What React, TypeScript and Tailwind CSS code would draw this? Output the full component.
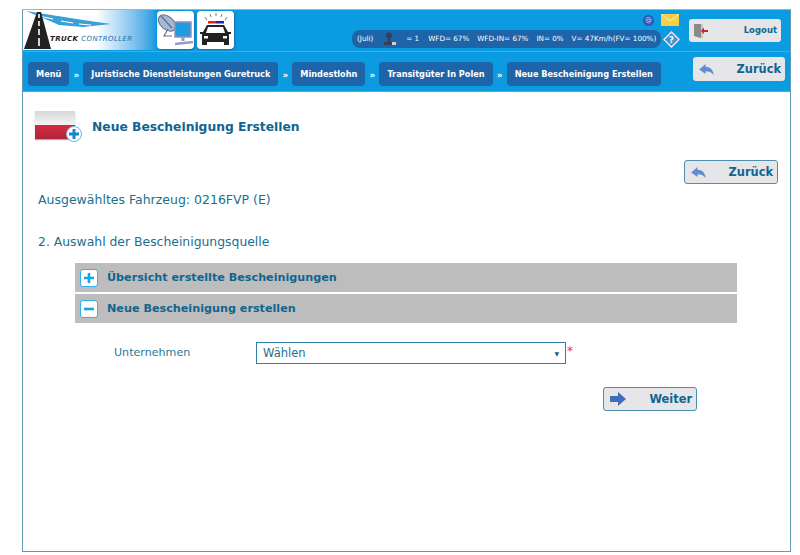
const sans = "font-['DejaVu_Sans',sans-serif]";

function Logo() {
  return (
    <div className="relative h-[40px] w-[133px] bg-gradient-to-r from-white from-[55%] to-[#0a9be0]">
      <svg viewBox="0 0 133 40" className="absolute inset-0 h-[40px] w-[133px]">
        <path d="M3 1 L60 10 L88 14 L60 17 L36 15 L20 8 Z" fill="#3b9fd8" />
        <path d="M16 6 L30 9 M38 11 L50 13 M56 14 L68 15" stroke="#ffffff" strokeWidth="1.2" />
        <path d="M14 2 L1 39 L28 39 L18 2 Z" fill="#222" />
        <path d="M16 4 V8 M16 11 V16 M16 19 V25 M16 28 V36" stroke="#fff" strokeWidth="1.6" />
      </svg>
      <span className={`absolute left-[27px] top-[24px] whitespace-nowrap text-[7px] font-bold italic leading-[10px] tracking-[0.4px] text-[#222] ${sans}`}>
        TRUCK <span className="font-normal text-[#1b6fa8]">CONTROLLER</span>
      </span>
    </div>
  );
}

function SatelliteIcon() {
  return (
    <div className="flex h-[38px] w-[37px] items-center justify-center rounded-[4px] bg-white shadow-[1px_1px_2px_#1b6fa8]">
      <svg viewBox="0 0 37 38" className="h-[38px] w-[37px]">
        <ellipse cx="10" cy="12" rx="10" ry="6.5" transform="rotate(40 10 12)" fill="#a9b8d2" stroke="#5f6f95" />
        <path d="M4 5 L15 17 M11 18 L7 25 H15" stroke="#5f6f95" strokeWidth="1.2" fill="none" />
        <rect x="18" y="11" width="16" height="15" fill="#1f9be0" stroke="#9090c4" strokeWidth="1.5" />
        <path d="M26 26 V30" stroke="#9a9ac4" strokeWidth="3" />
        <path d="M18 33 L36 31" stroke="#9a9ac4" strokeWidth="2.5" />
      </svg>
    </div>
  );
}

function PoliceIcon() {
  return (
    <div className="flex h-[38px] w-[37px] items-center justify-center rounded-[4px] bg-white shadow-[1px_1px_2px_#1b6fa8]">
      <svg viewBox="0 0 37 38" className="h-[38px] w-[37px]">
        <path d="M8 6 L10 9 M13 3 L14 6 M19 2 V5 M25 3 L24 6 M30 6 L28 9" stroke="#555" strokeWidth="0.8" />
        <rect x="11" y="10" width="8" height="2.5" fill="#d22" />
        <rect x="19" y="10" width="8" height="2.5" fill="#22b" />
        <path d="M10 14 H27 L31 21 H34 V23 H32 V34 H27 V31 H10 V34 H5 V23 H3 V21 H6 Z" fill="#222" />
        <path d="M11 16 H26 L28 22 H9 Z" fill="#fff" />
        <rect x="7" y="25" width="4" height="2.5" fill="#fff" />
        <rect x="26" y="25" width="4" height="2.5" fill="#fff" />
      </svg>
    </div>
  );
}

function BackArrow() {
  return (
    <svg viewBox="0 0 16 12" className="h-[11px] w-[15px]">
      <path d="M0 6 L7 0 V3 C12 3 15 6 16 12 C13 9 11 8 7 8 V11 Z" fill="#5f8ed2" />
    </svg>
  );
}

function ActionButton({ label, icon, className }: { label: string; icon: React.ReactNode; className: string }) {
  return (
    <button
      type="button"
      className={`flex h-[24px] items-center justify-between rounded-[3px] bg-[#e6e6e8] pl-[6px] pr-[4px] text-[11.4px] font-bold text-[#0f6590] ${sans} ${className}`}
    >
      {icon}
      <span className="pt-[1px]">{label}</span>
    </button>
  );
}

function Crumb({ label }: { label: string }) {
  return (
    <span className={`flex h-[24px] items-center whitespace-nowrap rounded-[4px] bg-[#1e64a8] px-[8px] text-[8.2px] font-bold text-white ${sans}`}>
      {label}
    </span>
  );
}

function Sep() {
  return <span className={`mt-[7px] w-[14px] text-center text-[9px] font-bold text-white ${sans}`}>»</span>;
}

function AccordionRow({ open, label }: { open: boolean; label: string }) {
  return (
    <div className="flex h-[29px] items-center gap-[9px] bg-[#bdbdbd] pl-[5px]">
      <span className="flex h-[18px] w-[18px] items-center justify-center rounded-[3px] border border-[#35b0ee] bg-white">
        <svg viewBox="0 0 12 12" className="h-[12px] w-[12px]">
          <path d={open ? "M1 6 H11" : "M6 1 V11 M1 6 H11"} stroke="#18a5e8" strokeWidth="2.6" />
        </svg>
      </span>
      <span className={`pt-[2px] text-[11.2px] font-bold text-[#0f6590] ${sans}`}>{label}</span>
    </div>
  );
}

export default function App() {
  return (
    <div className={`h-[555px] w-[800px] overflow-hidden bg-white pl-[22px] pt-[9px] ${sans}`}>
      <div className="flex h-[543px] w-[769px] flex-col border border-[#5f9bb5] border-t-[#9db4c0]">
        <header className="flex h-[42px] items-start border-b border-[#6a9fb8] bg-[#0a9be0]">
          <Logo />
          <div className="ml-[1px] mt-[1px] flex gap-[3px]">
            <SatelliteIcon />
            <PoliceIcon />
          </div>
          <div className="ml-auto flex">
            <div className="flex flex-col items-end">
              <div className="mt-[3px] flex h-[14px] items-center gap-[7px] pr-[1px]">
                <span className="flex h-[11px] w-[11px] items-center justify-center rounded-full bg-[#2f57b5] text-[7px] leading-none text-[#cfd8ee]">@</span>
                <svg viewBox="0 0 18 12" className="h-[12px] w-[18px]">
                  <rect width="18" height="12" fill="#f7cf4a" />
                  <path d="M0 0 L9 7 L18 0" fill="none" stroke="#fff2b0" strokeWidth="1" />
                </svg>
              </div>
              <div className="mt-[3px] flex items-center">
                <div className="flex h-[18px] w-[309px] items-center rounded-[8px] bg-[#1e64a8] pl-[5px] text-[7.2px] text-white">
                  <span>(Juli)</span>
                  <svg viewBox="0 0 14 14" className="ml-[10px] h-[14px] w-[14px]">
                    <circle cx="6" cy="3.5" r="3" fill="#33415c" />
                    <path d="M5 6 H7 L8 11 H4 Z" fill="#33415c" />
                    <path d="M1 13 H9 V10 H1 Z" fill="#33415c" />
                    <rect x="9" y="10" width="4" height="3" fill="#d0d0d0" />
                  </svg>
                  <span className="ml-[9px]">= 1</span>
                  <span className="ml-[9px]">WFD= 67%</span>
                  <span className="ml-[8px]">WFD-IN= 67%</span>
                  <span className="ml-[8px]">IN= 0%</span>
                  <span className="ml-[8px]">V= 47Km/h(FV= 100%)</span>
                </div>
                <svg viewBox="0 0 18 18" className="ml-[2px] h-[17px] w-[17px]">
                  <path d="M9 1 L17 9 L9 17 L1 9 Z" fill="#4a8fd0" stroke="#e8eef8" strokeWidth="1.4" />
                  <text x="9" y="12.5" textAnchor="middle" fontSize="9" fontWeight="700" fill="#fff">?</text>
                </svg>
              </div>
            </div>
            <button type="button" className="ml-[9px] mr-[9px] mt-[9px] flex h-[23px] w-[92px] items-center justify-between rounded-[3px] bg-[#e6e6e8] pl-[4px] pr-[4px] text-[8.5px] font-bold text-[#0f6590]">
              <svg viewBox="0 0 16 16" className="h-[16px] w-[16px]">
                <path d="M1 1 H8 V15 L1 13 Z" fill="#8a8a8a" />
                <path d="M8 1 H10 V15 H8 Z" fill="#c8c8c8" />
                <path d="M15 7 H11 V4.5 L8 8 L11 11 V9 H15 Z" fill="#d81e2c" />
              </svg>
              <span>Logout</span>
            </button>
          </div>
        </header>
        <nav className="flex h-[40px] items-start justify-between border-b border-[#6a9fb8] bg-[#0a9be0] pl-[5px] pr-[5px]">
          <div className="mt-[10px] flex">
            <Crumb label="Menü" />
            <Sep />
            <Crumb label="Juristische Dienstleistungen Guretruck" />
            <Sep />
            <Crumb label="Mindestlohn" />
            <Sep />
            <Crumb label="Transitgüter In Polen" />
            <Sep />
            <Crumb label="Neue Bescheinigung Erstellen" />
          </div>
          <ActionButton label="Zurück" icon={<BackArrow />} className="mt-[5px] w-[92px]" />
        </nav>
        <main className="flex flex-1 flex-col bg-white">
          <div className="ml-[12px] mt-[19px] flex items-start">
            <div className="relative h-[28px] w-[40px] overflow-visible shadow-[0_1px_1px_#aaa]">
              <div className="h-[14px] w-[40px] bg-gradient-to-b from-[#d8d8d8] to-[#f4f4f4]" />
              <div className="h-[14px] w-[40px] bg-gradient-to-b from-[#d42a40] to-[#b0263a]" />
              <span className="absolute left-[31px] top-[15px] flex h-[16px] w-[16px] items-center justify-center rounded-full border border-[#6bb5e8] bg-white">
                <svg viewBox="0 0 10 10" className="h-[10px] w-[10px]">
                  <path d="M5 0 V10 M0 5 H10" stroke="#1b83c8" strokeWidth="3" />
                </svg>
              </span>
            </div>
            <h1 className="ml-[17px] mt-[7px] text-[12.3px] font-bold text-[#0f6590]">Neue Bescheinigung Erstellen</h1>
          </div>
          <div className="mt-[21px] flex justify-end pr-[12px]">
            <ActionButton label="Zurück" icon={<BackArrow />} className="w-[94px] border border-[#4c8fae]" />
          </div>
          <p className="ml-[15px] mt-[7px] text-[12.5px] text-[#1a6f8e]">Ausgewähltes Fahrzeug: 0216FVP (E)</p>
          <p className="ml-[15px] mt-[23px] text-[12.4px] text-[#1a6f8e]">2. Auswahl der Bescheinigungsquelle</p>
          <div className="ml-[52px] mt-[12px] flex w-[662px] flex-col gap-[2px]">
            <AccordionRow open={false} label="Übersicht erstellte Bescheinigungen" />
            <AccordionRow open label="Neue Bescheinigung erstellen" />
          </div>
          <div className="ml-[91px] mt-[19px] flex items-center">
            <span className="w-[142px] text-[11.1px] text-[#2a7a98]">Unternehmen</span>
            <div className="flex h-[22px] w-[310px] items-center justify-between border border-[#2f7fa6] pl-[6px] pr-[6px] text-[11.5px] text-[#2a6f8c]">
              <span>Wählen</span>
              <span className="text-[6px] text-[#1a5f80]">▼</span>
            </div>
            <span className="mb-[4px] ml-[1px] text-[12px] leading-none text-[#f03050]">*</span>
          </div>
          <div className="ml-[580px] mt-[23px]">
            <ActionButton
              label="Weiter"
              icon={
                <svg viewBox="0 0 16 14" className="h-[14px] w-[16px]">
                  <path d="M0 4 H8 V0 L16 7 L8 14 V10 H0 Z" fill="#3f6fb8" />
                </svg>
              }
              className="w-[94px] border border-[#4c8fae]"
            />
          </div>
        </main>
      </div>
    </div>
  );
}
